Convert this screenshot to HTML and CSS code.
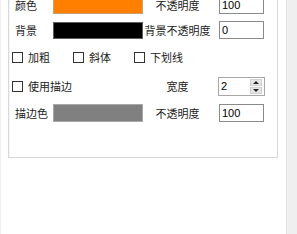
FILE: index.html
```html
<!DOCTYPE html>
<html lang="zh-CN">
<head>
  <meta charset="UTF-8">
  <meta name="viewport" content="width=device-width, initial-scale=1.0">
  <title>字幕样式</title>
  <link rel="stylesheet" href="styles.css">
</head>
<body>
  <div class="window">
    <div class="content">
      <!-- 字体设置 -->
      <div class="group">
        <div class="field-row">
          <span class="label">颜色</span>
          <span class="swatch swatch-orange"></span>
          <span class="label-mid">不透明度</span>
          <span class="text-box">100</span>
        </div>

        <div class="field-row row-bg">
          <span class="label">背景</span>
          <span class="swatch swatch-black"></span>
          <span class="label-mid">背景不透明度</span>
          <span class="text-box">0</span>
        </div>

        <div class="check-row">
          <label class="check"><span class="box"></span>加粗</label>
          <label class="check"><span class="box"></span>斜体</label>
          <label class="check"><span class="box"></span>下划线</label>
        </div>

        <!-- 描边 -->
        <div class="field-row row-outline">
          <label class="check check-wide"><span class="box"></span>使用描边</label>
          <span class="label-mid">宽度</span>
          <span class="spin-box">
            <span class="spin-value">2</span>
            <span class="spin-buttons">
              <span class="spin-btn"><span class="arrow-up"></span></span>
              <span class="spin-btn"><span class="arrow-down"></span></span>
            </span>
          </span>
        </div>

        <div class="field-row row-stroke">
          <span class="label">描边色</span>
          <span class="swatch swatch-gray"></span>
          <span class="label-mid">不透明度</span>
          <span class="text-box">100</span>
        </div>
      </div>
    </div>
    <div class="scroll-strip"></div>
  </div>
</body>
</html>
```

FILE: styles.css
```css
body {
  margin: 0;
  background-color: #fff;
  font-family: "Noto Sans CJK SC", "Noto Sans", sans-serif;
  font-size: 11px;
  color: #1c1c1c;
}

.window {
  display: flex;
  height: 234px;
  overflow: hidden;
  border-left: 1px solid #f0f0f0;
}

.content {
  flex: 1;
  padding-left: 7px;
}

.scroll-strip {
  width: 10px;
  background-color: #efefef;
  border-left: 1px solid #e4e4e4;
}

/* Group box */
.group {
  width: 270px;
  box-sizing: border-box;
  margin-top: -18px;
  padding: 12px 0 34px 6px;
  border: 1px solid #d8d8d8;
  box-shadow: inset 1px 1px 0 #f6f6f6;
}

.field-row {
  display: grid;
  grid-template-columns: 38px 90px 76px 45px;
  align-items: center;
  height: 20px;
}

.row-bg {
  margin-top: 5px;
}

.row-outline {
  margin-top: 9px;
}

.row-stroke {
  margin-top: 7px;
}

.label {
  white-space: nowrap;
}

.label-mid {
  padding-right: 7px;
  text-align: center;
  white-space: nowrap;
}

.swatch {
  height: 17px;
  box-sizing: border-box;
  border: 1px solid #a0a0a0;
}

.swatch-orange {
  background-color: #ff8000;
  border-color: #c8a070;
}

.swatch-black {
  background-color: #000;
  border-color: #606060;
}

.swatch-gray {
  background-color: #808080;
  border-color: #a8a8a8;
  height: 18px;
}

.text-box {
  height: 18px;
  box-sizing: border-box;
  border: 1px solid #8a8a8a;
  padding-left: 2px;
  font-family: "Liberation Sans", Arial, sans-serif;
  font-size: 11px;
  line-height: 16px;
  color: #000;
  background-color: #fff;
}

/* Checkboxes */
.check-row {
  display: flex;
  margin-top: 7px;
  margin-left: -3px;
  height: 20px;
  align-items: center;
}

.check {
  display: flex;
  align-items: center;
  width: 61px;
  white-space: nowrap;
}

.check-wide {
  grid-column: 1 / 3;
  margin-left: -3px;
}

.box {
  width: 11px;
  height: 11px;
  box-sizing: border-box;
  border: 1px solid #333;
  background-color: #fff;
  margin-right: 5px;
}

/* Spinner */
.spin-box {
  display: flex;
  width: 47px;
  height: 19px;
  margin-left: -1px;
  box-sizing: border-box;
  border: 1px solid #a8a8a8;
  background-color: #fff;
}

.spin-value {
  flex: 1;
  padding-left: 2px;
  font-family: "Liberation Sans", Arial, sans-serif;
  line-height: 16px;
  color: #000;
}

.spin-buttons {
  display: flex;
  flex-direction: column;
  width: 12px;
  margin: 1px 2px 1px 0;
  gap: 1px;
}

.spin-btn {
  flex: 1;
  display: flex;
  align-items: center;
  justify-content: center;
  background-color: #e6e6e6;
  border: 1px solid #d0d0d0;
}

.arrow-up,
.arrow-down {
  width: 0;
  height: 0;
  border-left: 3px solid transparent;
  border-right: 3px solid transparent;
}

.arrow-up {
  border-bottom: 3px solid #222;
}

.arrow-down {
  border-top: 3px solid #222;
}
```
